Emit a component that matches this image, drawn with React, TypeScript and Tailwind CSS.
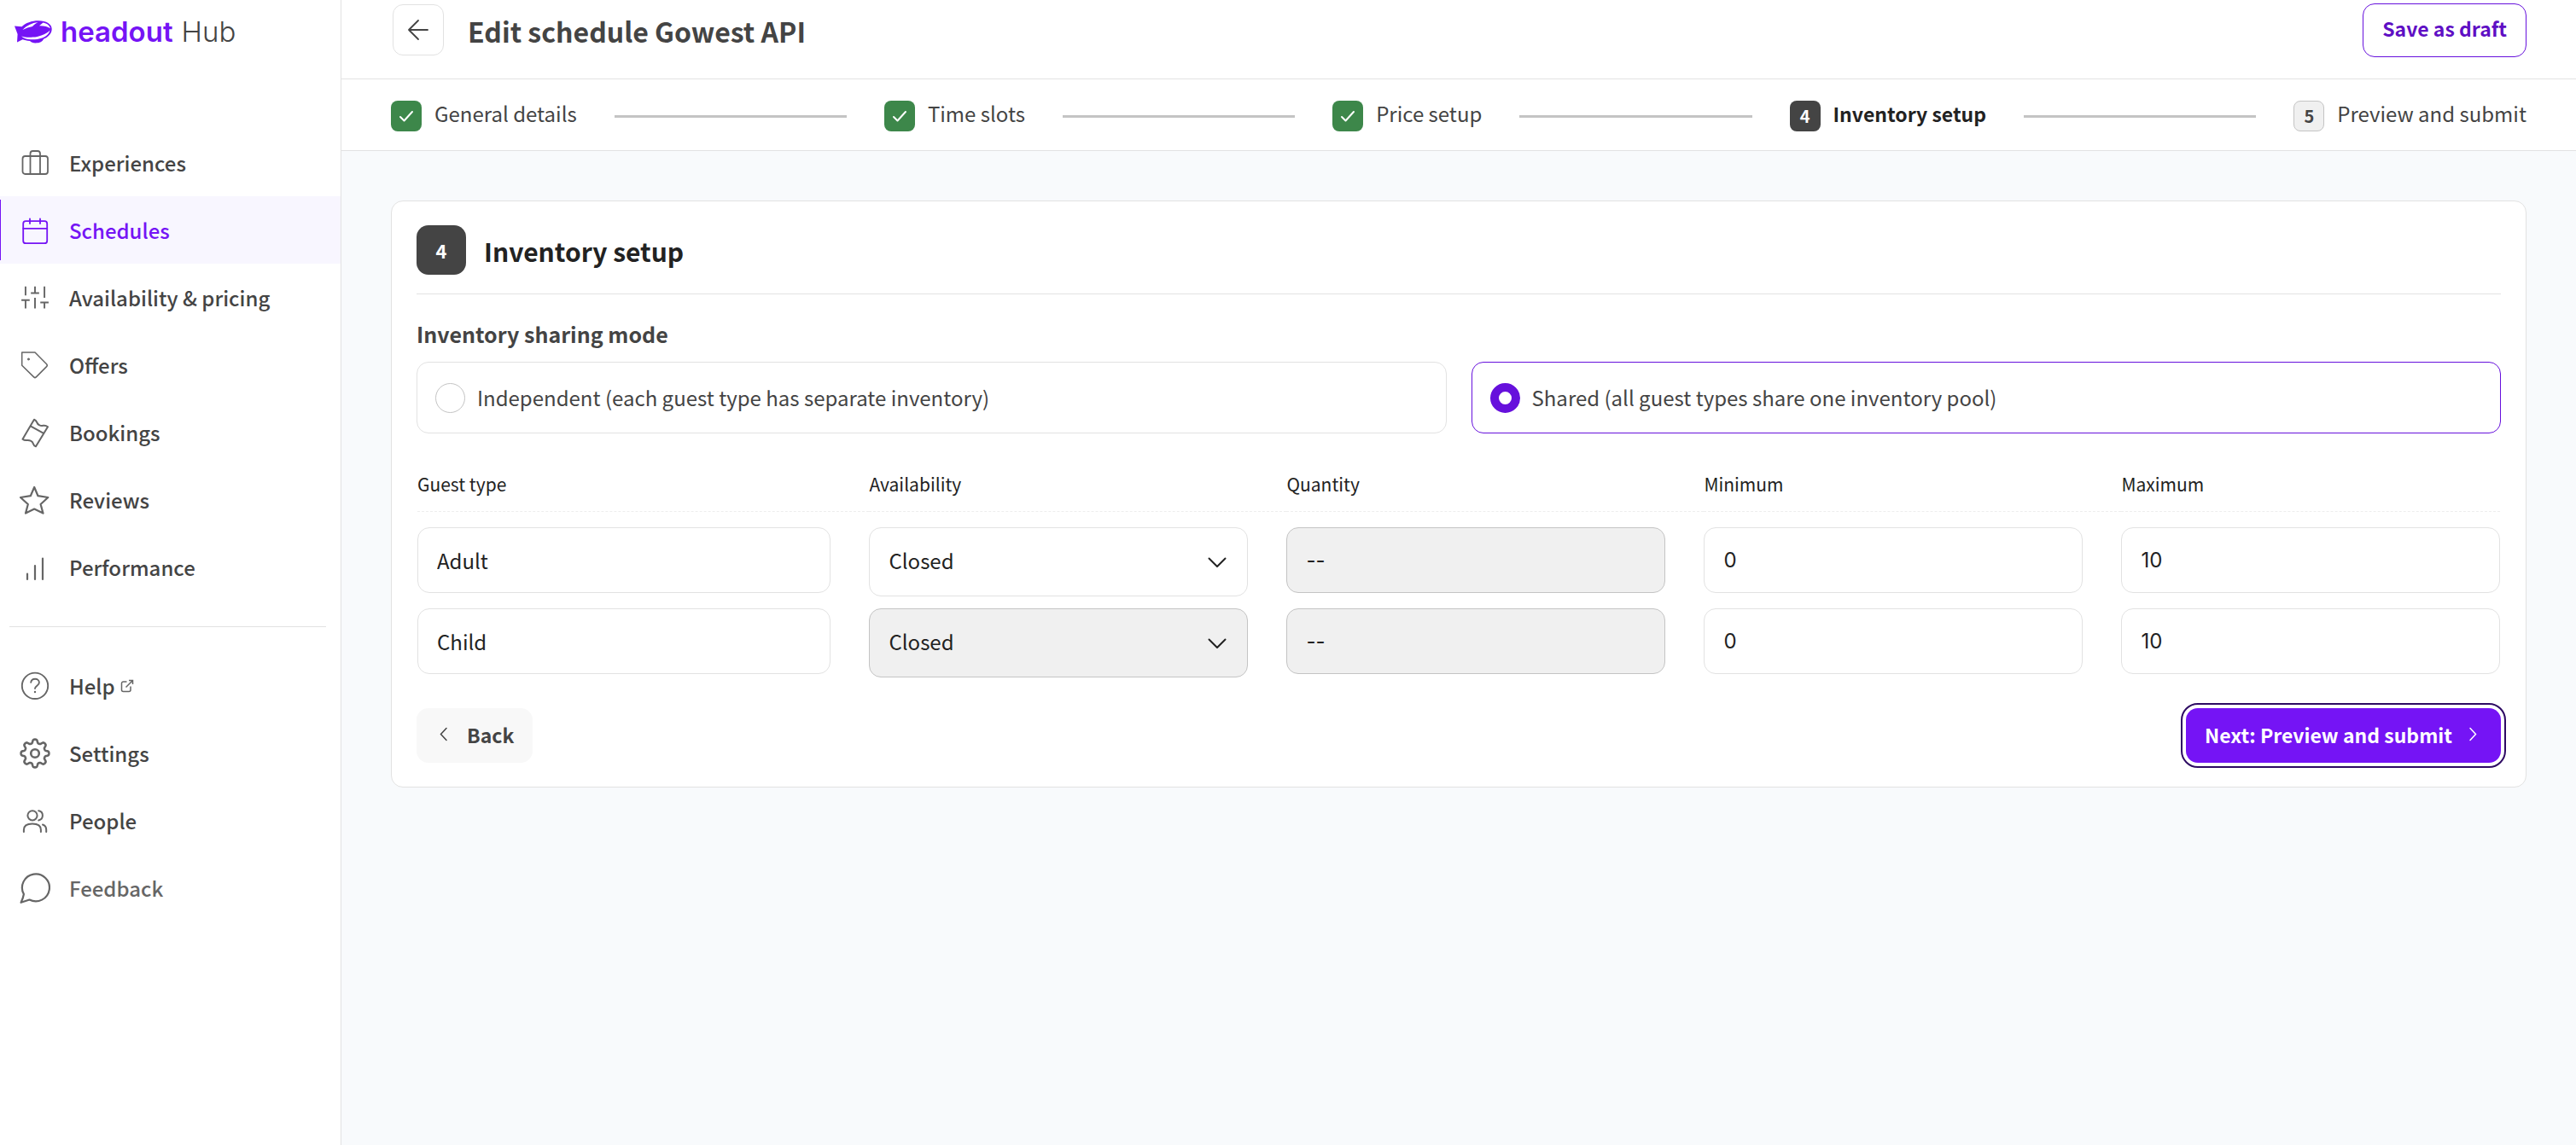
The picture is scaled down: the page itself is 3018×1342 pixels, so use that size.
import { Fragment, useState, type ReactNode } from 'react'
import clsx from 'clsx'

type NavItem = { label: string; icon: ReactNode; active?: boolean; external?: boolean; muted?: boolean }

function Icon({ children, strokeWidth = 2, viewBox = '0 0 36 36' }: { children: ReactNode; strokeWidth?: number; viewBox?: string }) {
  return (
    <svg
      className="size-9 shrink-0"
      viewBox={viewBox}
      fill="none"
      stroke="currentColor"
      strokeWidth={strokeWidth}
      strokeLinecap="round"
      strokeLinejoin="round"
      aria-hidden="true"
    >
      {children}
    </svg>
  )
}

// Eight rounded teeth around the hub
const gearPath =
  Array.from({ length: 160 }, (_, i) => {
    const t = (i / 160) * Math.PI * 2
    const r = 14.3 + 2.2 * Math.tanh(1.8 * Math.cos(8 * t))
    return `${i === 0 ? 'M' : 'L'}${(18 + r * Math.cos(t)).toFixed(2)} ${(18 + r * Math.sin(t)).toFixed(2)}`
  }).join('') + 'Z'

const mainNav: NavItem[] = [
  {
    label: 'Experiences',
    icon: (
      <Icon strokeWidth={1.8}>
        <rect x="3.5" y="10" width="29.5" height="21" rx="3" />
        <path d="M12.5 31V7a3 3 0 0 1 3-3H21a3 3 0 0 1 3 3v24" />
      </Icon>
    ),
  },
  {
    label: 'Schedules',
    active: true,
    icon: (
      <Icon strokeWidth={1.8}>
        <rect x="4.2" y="7.2" width="28" height="26" rx="3" />
        <path d="M4.2 15.8h28M12 4.4V10M24 4.4V10" />
      </Icon>
    ),
  },
  {
    label: 'Availability & pricing',
    icon: (
      <Icon strokeWidth={1.4} viewBox="-1 -1 26 26">
        <path strokeLinecap="butt" d="M4 21v-7M4 10V2.5M12 21v-9M12 8V2.5M20 21v-5M20 12V2.5M.5 14h7M8.5 8h7M16.5 16h7" />
      </Icon>
    ),
  },
  {
    label: 'Offers',
    icon: (
      <Icon strokeWidth={1.5}>
        <path d="M2.7 3H18l13.6 13.8a2 2 0 0 1 0 2.8L19.4 31.9a2 2 0 0 1-2.8 0L2.7 18.2z" />
        <circle cx="10.4" cy="11" r="1.1" fill="currentColor" strokeWidth="0.8" />
      </Icon>
    ),
  },
  {
    label: 'Bookings',
    icon: (
      <Icon>
        <path d="M17 2.7c2 .8 2.6 1.6 3 2.9.6 1.9 1.7 3 3.3 3.7 1.4.7 2.7.8 4.4.5 2.2-.4 3.4-.1 5.3 1.4L19 34.3c-2-.7-2.5-1.3-2.9-2.8-.5-1.9-1.6-3-3.2-3.8-1.5-.8-2.8-.9-4.4-.7-2.2.3-3.4 0-5-1.3zM12.7 10.4l15 8.2" />
      </Icon>
    ),
  },
  {
    label: 'Reviews',
    icon: (
      <Icon strokeWidth={2.2}>
        <path d="M17.2 3l4.3 10.2L33.3 15l-8.7 8 2.9 10.6-10.3-5-10.2 5L9.8 23 1 15l11.8-1.8z" />
      </Icon>
    ),
  },
  {
    label: 'Performance',
    icon: (
      <Icon strokeWidth={2.2}>
        <path d="M9 25.5v6.5M18 16v16M27 7.5V32" />
      </Icon>
    ),
  },
]

const footerNav: NavItem[] = [
  {
    label: 'Help',
    external: true,
    icon: (
      <Icon strokeWidth={1.9}>
        <circle cx="18" cy="17.8" r="15.2" />
        <path d="M13.2 13.8c.4-2.4 2.3-4 4.9-4 2.7 0 4.8 1.7 4.8 4.2 0 3.5-4.9 3.8-4.9 7" />
        <circle cx="18" cy="25" r=".6" fill="currentColor" strokeWidth="1.2" />
      </Icon>
    ),
  },
  {
    label: 'Settings',
    icon: (
      <Icon strokeWidth={2.6}>
        <path d={gearPath} />
        <circle cx="18" cy="18" r="4.8" />
      </Icon>
    ),
  },
  {
    label: 'People',
    icon: (
      <Icon>
        <circle cx="15" cy="11.8" r="5.6" />
        <path d="M22.2 6.3c2.9.4 4.7 2.7 4.7 5.5s-1.8 5.1-4.7 5.6M4.9 31v-2.5c0-4.5 3.8-7 10-7s10 2.5 10 7V31M27 22.5c2.6.8 4.2 2.8 4.2 6V31" />
      </Icon>
    ),
  },
  {
    label: 'Feedback',
    muted: true,
    icon: (
      <Icon strokeWidth={2.2}>
        <path d="M4.9 25A16 16 0 1 1 11.5 31.5L1.6 34.8C3.2 31.5 4.3 28.5 4.9 25z" />
      </Icon>
    ),
  },
]

const steps = ['General details', 'Time slots', 'Price setup', 'Inventory setup', 'Preview and submit']
const currentStep = 4

const modes = [
  { value: 'independent', label: 'Independent (each guest type has separate inventory)' },
  { value: 'shared', label: 'Shared (all guest types share one inventory pool)' },
]

const guests = [
  { type: 'Adult', min: '0', max: '10', locked: false },
  { type: 'Child', min: '0', max: '10', locked: true },
]

function Logo() {
  return (
    <a href="#" className="flex items-center gap-2.5 pl-[17px] font-['Inter',sans-serif] text-[33px] leading-9">
      <svg className="h-[27px] w-11 text-[#7514f5]" viewBox="0 0 44 27" fill="currentColor" aria-hidden="true">
        <path d="M0 6.5l8.5.7C13 3 20 .3 28 .3c9.500 0 15.700 4 15.700 9.700 0 6-5.700 10.300-9.700 11.800-1 3-4.500 4.700-9.500 4.700-3 0-5-1.200-6.500-2.500-3.500-.3-6.500-.9-8.500-1.800L3 25.500l.6-9.500z" />
        <path
          d="M9.5 11C14 6 20.5 2.8 27.5 2.3c-3 1.5-5 2.8-6.5 4.7-4 .8-7.500 2-11.500 4zM29 6.200l4.500-3.600c4.500.9 7.500 3 8.300 6.600-3-2.200-7.300-3.200-12.800-3zM8 18.500c4 1.200 8.500 1.600 13.500 1.100 3.500-.3 7-1 10-2.200 4.500-1.500 8-3.500 10-5.900-1 4.200-4.500 7.200-9 8.900-4.500 1.500-9 2.100-13.500 1.900-4.500-.2-8.500-1.500-11-3.800z"
          fill="#fff"
        />
      </svg>
      <span className="font-semibold text-[#7514f5]">headout</span>
      <span className="font-light text-[#444]">Hub</span>
    </a>
  )
}

function NavLink({ item }: { item: NavItem }) {
  return (
    <a
      href="#"
      className={clsx(
        'relative flex h-[79px] items-center gap-[22px] pl-[23px] text-2xl font-medium',
        item.active ? 'bg-[#f8f6ff] text-[#7514f5]' : 'text-[#666]'
      )}
    >
      {item.active && <span className="absolute inset-y-1 left-0 w-px bg-[#7514f5]" />}
      {item.icon}
      <span className={clsx('flex items-center gap-1.5', !item.active && !item.muted && 'text-[#444]')}>
        {item.label}
        {item.external && (
          <svg className="size-4 text-[#666]" viewBox="0 0 16 16" fill="none" stroke="currentColor" strokeWidth="1.5" aria-hidden="true">
            <path d="M7.5 3H3.5A2 2 0 0 0 1.5 5v7.5a2 2 0 0 0 2 2H10a2 2 0 0 0 2-2V8.5M10 1.5h4.5V6M14.5 1.5L6.5 9.5" />
          </svg>
        )}
      </span>
    </a>
  )
}

function Sidebar() {
  return (
    <aside className="w-[400px] shrink-0 border-r border-[#e2e2e2] bg-white pt-[19px]">
      <Logo />
      <nav className="mt-24">
        {mainNav.map((item) => (
          <NavLink key={item.label} item={item} />
        ))}
        <hr className="mt-[30px] mr-[17px] mb-[29px] ml-[11px] border-[#e2e2e2]" />
        {footerNav.map((item) => (
          <NavLink key={item.label} item={item} />
        ))}
      </nav>
    </aside>
  )
}

function Stepper() {
  return (
    <ol className="flex h-[84px] items-center gap-11 border-b border-[#e2e2e2] bg-white px-[58px] pt-[3px]">
      {steps.map((label, i) => {
        const step = i + 1
        const current = step === currentStep
        return (
          <Fragment key={label}>
            {i > 0 && <li aria-hidden="true" className="h-[3px] flex-1 bg-[#c4c4c4]" />}
            <li className="flex items-center gap-[15px]">
              {step < currentStep ? (
                <span className="flex size-9 items-center justify-center rounded-lg bg-[#3d874a]">
                  <svg className="size-5" viewBox="0 0 20 20" fill="none" stroke="#fff" strokeWidth="2" strokeLinecap="round" strokeLinejoin="round" aria-hidden="true">
                    <path d="M3 11l4.5 4.5L17 5" />
                  </svg>
                </span>
              ) : (
                <span
                  className={clsx(
                    'flex size-9 items-center justify-center rounded-lg text-xl font-bold',
                    current ? 'bg-[#444] text-white' : 'border border-[#c4c4c4] bg-[#f0f0f0] text-[#444]'
                  )}
                >
                  {step}
                </span>
              )}
              <span className={clsx('pb-1.5', current ? 'text-[23px] font-bold text-[#222]' : 'text-2xl text-[#444]')}>{label}</span>
            </li>
          </Fragment>
        )
      })}
    </ol>
  )
}

const fieldClass = 'h-[77px] w-full rounded-[14px] border px-[22px] text-2xl text-[#222]'

function GuestRow({ guest }: { guest: (typeof guests)[number] }) {
  const [min, setMin] = useState(guest.min)
  const [max, setMax] = useState(guest.max)
  const [type, setType] = useState(guest.type)

  return (
    <tr className="align-top">
      <td className="pr-[45px] pb-3.5">
        <input aria-label="Guest type" value={type} onChange={(e) => setType(e.target.value)} className={clsx(fieldClass, 'border-[#e2e2e2]')} />
      </td>
      <td className="pr-[45px] pb-3.5">
        <div className="relative">
          <select
            aria-label="Availability"
            disabled={guest.locked}
            className={clsx(
              'h-[81px] w-full appearance-none rounded-[14px] border px-[22px] pb-1 text-2xl text-[#222] opacity-100',
              guest.locked ? 'border-[#c4c4c4] bg-[#f0f0f0]' : 'border-[#e2e2e2] bg-white'
            )}
          >
            <option>Closed</option>
            <option>Limited</option>
            <option>Unlimited</option>
          </select>
          <svg
            className="pointer-events-none absolute top-1/2 right-6 size-6 -translate-y-1/2"
            viewBox="0 0 24 24"
            fill="none"
            stroke="#222"
            strokeWidth="2"
            strokeLinecap="round"
            strokeLinejoin="round"
            aria-hidden="true"
          >
            <path d="M2.5 7.5L12 17l9.5-9.5" />
          </svg>
        </div>
      </td>
      <td className="pr-[45px] pb-3.5">
        <input
          aria-label="Quantity"
          disabled
          defaultValue="--"
          className={clsx(fieldClass, "border-[#c4c4c4] bg-[#f0f0f0] font-['Inter',sans-serif]")}
        />
      </td>
      <td className="pr-[45px] pb-3.5">
        <input
          aria-label="Minimum"
          value={min}
          onChange={(e) => setMin(e.target.value)}
          className={clsx(fieldClass, "border-[#e2e2e2] font-['Inter',sans-serif]")}
        />
      </td>
      <td className="pb-3.5">
        <input
          aria-label="Maximum"
          value={max}
          onChange={(e) => setMax(e.target.value)}
          className={clsx(fieldClass, "border-[#e2e2e2] font-['Inter',sans-serif]")}
        />
      </td>
    </tr>
  )
}

function InventoryCard() {
  const [mode, setMode] = useState('shared')

  return (
    <section className="rounded-[14px] border border-[#e2e2e2] bg-white px-[29px] pt-7 pb-7">
      <div className="flex items-center gap-[21px] border-b border-[#e2e2e2] pb-[22px]">
        <span className="flex size-[58px] items-center justify-center rounded-[14px] bg-[#444] text-[22px] font-bold text-white">4</span>
        <h2 className="pt-0.5 text-3xl font-bold text-[#222]">Inventory setup</h2>
      </div>

      <fieldset className="mt-[30px]">
        <legend className="text-[25px] leading-8 font-bold text-[#444]">Inventory sharing mode</legend>
        <div className="mt-[17px] grid grid-cols-2 gap-[29px]">
          {modes.map(({ value, label }) => (
            <label
              key={value}
              className={clsx(
                'flex h-[84px] items-center gap-3.5 rounded-[14px] border px-[21px] text-2xl text-[#444]',
                mode === value ? 'border-[#6610dc]' : 'border-[#e2e2e2]'
              )}
            >
              <input
                type="radio"
                name="mode"
                value={value}
                checked={mode === value}
                onChange={() => setMode(value)}
                className="size-[35px] appearance-none rounded-full border border-[#c4c4c4] bg-white checked:border-[10px] checked:border-[#6610dc]"
              />
              {label}
            </label>
          ))}
        </div>
      </fieldset>

      <div className="mx-px mt-[35px]">
        <table className="w-full table-fixed border-separate border-spacing-0">
          <thead>
            <tr className="text-left text-[21px] leading-8 text-[#222]">
              <th className="w-[21.7%] border-b border-dashed border-[#eee] pt-2 pb-4 font-normal">Guest type</th>
              <th className="w-[20.04%] border-b border-dashed border-[#eee] pt-2 pb-4 font-normal">Availability</th>
              <th className="w-[20.04%] border-b border-dashed border-[#eee] pt-2 pb-4 font-normal">Quantity</th>
              <th className="w-[20.04%] border-b border-dashed border-[#eee] pt-2 pb-4 font-normal">Minimum</th>
              <th className="border-b border-dashed border-[#eee] pt-2 pb-4 font-normal">Maximum</th>
            </tr>
            <tr aria-hidden="true">
              <td colSpan={5} className="h-[18px]" />
            </tr>
          </thead>
          <tbody>
            {guests.map((guest) => (
              <GuestRow key={guest.type} guest={guest} />
            ))}
          </tbody>
        </table>
      </div>

      <div className="mt-[22px] flex items-center justify-between">
        <button type="button" className="flex h-16 items-center gap-[17px] rounded-[14px] bg-[#f8f8f8] px-[22px] pb-0.5 text-[23px] font-bold text-[#444]">
          <svg className="size-5" viewBox="0 0 20 20" fill="none" stroke="currentColor" strokeWidth="1.5" strokeLinecap="round" aria-hidden="true">
            <path d="M13 2.5L6.5 9.5l6.5 7" />
          </svg>
          Back
        </button>
        <button
          type="button"
          className="flex h-16 items-center gap-[15px] rounded-[14px] bg-[#7514f5] px-[22px] pb-0.5 text-[23px] font-bold text-white outline-2 outline-offset-4 outline-[#2d0a63]"
        >
          Next: Preview and submit
          <svg className="size-5" viewBox="0 0 20 20" fill="none" stroke="currentColor" strokeWidth="1.5" strokeLinecap="round" aria-hidden="true">
            <path d="M6 2.5l6.5 7-6.5 7" />
          </svg>
        </button>
      </div>
    </section>
  )
}

export default function App() {
  return (
    <div className="flex min-h-screen bg-[#f8fafc] font-['Noto_Sans_CJK_SC',sans-serif]">
      <Sidebar />
      <main className="min-w-0 flex-1">
        <header className="flex h-[93px] items-start border-b border-[#e2e2e2] bg-white px-[58px]">
          <button type="button" aria-label="Back to schedules" className="mt-[5px] ml-0.5 flex size-[60px] items-center justify-center rounded-xl border border-[#e2e2e2] text-[#444]">
            <svg className="size-7" viewBox="0 0 28 28" fill="none" stroke="currentColor" strokeWidth="1.8" strokeLinecap="round" strokeLinejoin="round" aria-hidden="true">
              <path d="M25 14H3M14 3L3 14l11 11" />
            </svg>
          </button>
          <h1 className="mt-3.5 ml-7 text-[32px] leading-11 font-bold text-[#444]">Edit schedule Gowest API</h1>
          <button type="button" className="mt-1 ml-auto h-[63px] rounded-[14px] border border-[#6610dc] px-[22px] pb-1 text-[23px] font-bold text-[#5f0fc4]">
            Save as draft
          </button>
        </header>
        <Stepper />
        <div className="px-[58px] py-[58px]">
          <InventoryCard />
        </div>
      </main>
    </div>
  )
}
